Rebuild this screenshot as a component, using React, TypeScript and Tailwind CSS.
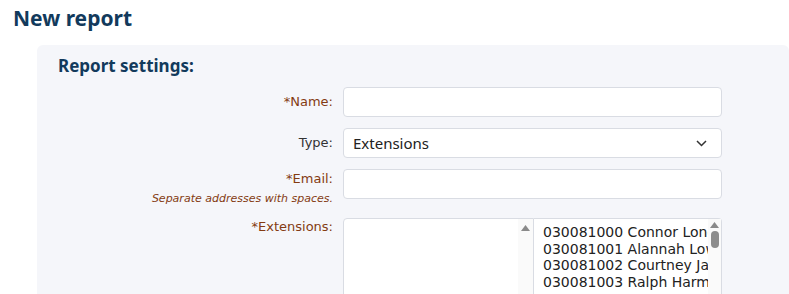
import React from "react";

const Label = ({ children, required }: { children: React.ReactNode; required?: boolean }) => (
  <span className={required ? "text-[#843b12]" : "text-[#333333]"}>
    {required ? "*" : ""}
    {children}:
  </span>
);

const UpArrow = () => (
  <svg width="9" height="6" viewBox="0 0 9 6" className="block">
    <path d="M4.5 0 L9 6 L0 6 Z" fill="#8a8a8a" />
  </svg>
);

export default function App() {
  const items = [
    "030081000 Connor Longworth",
    "030081001 Alannah Lowe",
    "030081002 Courtney James",
    "030081003 Ralph Harmon",
    "030081004 Maya Stone",
  ];
  return (
    <div className="w-[789px] h-[294px] overflow-hidden bg-white">
      <h1 className="pl-[13px] pt-[4px] text-[21px] leading-[28px] font-bold text-[#123a5c] font-['Noto_Sans',sans-serif]">
        New report
      </h1>
      <div className="ml-[37px] mt-[13px] rounded-t-[6px] bg-[#f5f6fa] pl-[21px] pt-[9px] h-[300px]">
        <h2 className="text-[17px] leading-[24px] font-bold text-[#123a5c] font-['Noto_Sans',sans-serif]">
          Report settings:
        </h2>
        <div className="mt-[9px] grid grid-cols-[275px_379px] gap-x-[10px] gap-y-[11px] font-['DejaVu_Sans',sans-serif] text-[13px]">
          <div className="flex items-center justify-end h-[30px]">
            <Label required>Name</Label>
          </div>
          <div className="h-[30px] rounded-[4px] border border-[#d9dce3] bg-white" />

          <div className="flex items-center justify-end h-[30px]">
            <Label>Type</Label>
          </div>
          <div className="h-[30px] rounded-[4px] border border-[#d9dce3] bg-white flex items-center justify-between pl-[9px] pr-[14px]">
            <span className="font-['Noto_Sans',sans-serif] text-[15px] text-[#222]">Extensions</span>
            <svg width="11" height="7" viewBox="0 0 11 7">
              <path d="M1 1 L5.5 5.5 L10 1" fill="none" stroke="#333" strokeWidth="1.5" />
            </svg>
          </div>

          <div className="flex flex-col items-end pt-[2px] h-[38px]">
            <span className="leading-[16px]"><Label required>Email</Label></span>
            <span className="mt-[5px] text-[11px] italic leading-[14px] text-[#843b12] whitespace-nowrap">
              Separate addresses with spaces.
            </span>
          </div>
          <div className="h-[30px] rounded-[4px] border border-[#d9dce3] bg-white" />

          <div className="flex justify-end pt-[1px]">
            <span className="leading-[16px]"><Label required>Extensions</Label></span>
          </div>
          <div className="flex h-[90px]">
            <div className="w-[191px] rounded-tl-[4px] border border-[#d9dce3] bg-white flex justify-end">
              <div className="w-[15px] bg-[#fafafa] flex justify-center pt-[6px]">
                <UpArrow />
              </div>
            </div>
            <div className="w-[188px] rounded-tr-[4px] border border-l-0 border-[#d9dce3] bg-white flex">
              <div className="flex-1 overflow-hidden pl-[9px] pt-[5px]">
                {items.map((t) => (
                  <div key={t} className="whitespace-nowrap text-[14px] leading-[16.7px] text-[#222]">
                    {t}
                  </div>
                ))}
              </div>
              <div className="w-[13px] bg-[#fafafa] flex flex-col items-center pt-[3px]">
                <UpArrow />
                <div className="mt-[3px] w-[8px] h-[17px] rounded-full bg-[#8c8c8c]" />
              </div>
            </div>
          </div>
        </div>
      </div>
    </div>
  );
}
